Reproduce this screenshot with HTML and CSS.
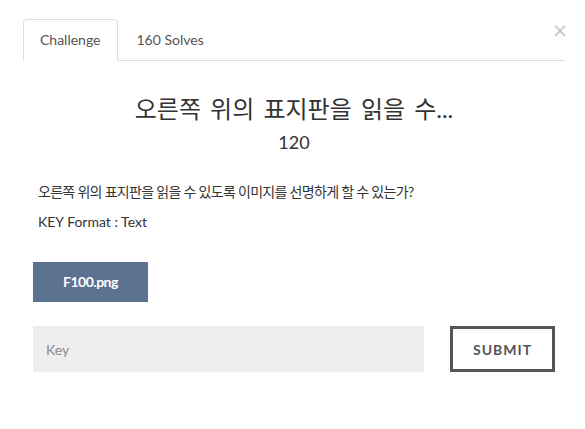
FILE: index.html
```html
<!DOCTYPE html>
<html lang="ko">
<head>
    <meta charset="UTF-8">
    <meta name="viewport" content="width=device-width, initial-scale=1.0">
    <title>Challenge</title>
    <link rel="stylesheet" href="styles.css">
</head>
<body>
    <div class="modal">
        <button class="close" type="button">&times;</button>

        <!-- Tabs -->
        <ul class="nav-tabs">
            <li class="tab active">Challenge</li>
            <li class="tab">160 Solves</li>
        </ul>

        <!-- Challenge body -->
        <div class="challenge">
            <h3 class="challenge-name">오른쪽 위의 표지판을 읽을 수...</h3>
            <div class="challenge-value">120</div>

            <div class="challenge-desc">
                <p class="desc-ko">오른쪽 위의 표지판을 읽을 수 있도록 이미지를 선명하게 할 수 있는가?</p>
                <p>KEY Format : Text</p>
            </div>

            <div class="files">
                <a class="file-button" href="#">F100.png</a>
            </div>

            <form class="key-form">
                <input type="text" class="key-input" placeholder="Key">
                <button type="submit" class="submit-button">SUBMIT</button>
            </form>
        </div>
    </div>
</body>
</html>
```

FILE: styles.css
```css
body {
    font-family: Lato, "Noto Sans CJK KR", sans-serif;
    font-size: 14px;
    color: #333;
    background-color: #fff;
    margin: 0;
}

.modal {
    position: relative;
    padding: 19px 20px 0 23px;
}

.close {
    position: absolute;
    top: 20px;
    right: 17px;
    padding: 0;
    border: none;
    background: none;
    font-family: "DejaVu Sans", sans-serif;
    font-size: 19px;
    line-height: 20px;
    color: #c4c4c4;
    cursor: pointer;
}

.nav-tabs {
    display: flex;
    list-style: none;
    margin: 0;
    padding: 0;
    border-bottom: 1px solid #ddd;
}

.tab {
    padding: 10px 16px;
    margin-right: 2px;
    margin-bottom: -1px;
    line-height: 20px;
    color: #555;
    border: 1px solid transparent;
    border-radius: 4px 4px 0 0;
}

.tab.active {
    border-color: #ddd;
    border-bottom-color: #fff;
    background-color: #fff;
}

.challenge {
    padding: 0 10px;
}

.challenge-name {
    margin: 35px 0 10px;
    font-size: 24px;
    font-weight: normal;
    line-height: 26px;
    text-align: center;
    word-spacing: 3px;
}

.challenge-value {
    font-size: 18px;
    line-height: 20px;
    text-align: center;
}

.challenge-desc {
    margin-top: 30px;
    padding-left: 5px;
}

.challenge-desc p {
    margin: 0 0 10px;
    line-height: 20px;
}

.challenge-desc .desc-ko {
    letter-spacing: -0.7px;
}

.files {
    margin-top: 30px;
}

.file-button {
    display: inline-block;
    width: 115px;
    height: 40px;
    line-height: 40px;
    text-align: center;
    background-color: #5b7290;
    color: #fff;
    font-weight: bold;
    text-decoration: none;
    letter-spacing: -0.5px;
}

.key-form {
    display: flex;
    justify-content: space-between;
    margin-top: 24px;
}

.key-input {
    width: 391px;
    height: 46px;
    box-sizing: border-box;
    padding: 0 13px;
    border: none;
    background-color: #eee;
    font-family: Lato, sans-serif;
    font-size: 14px;
    color: #333;
}

.key-input::placeholder {
    color: #8a8a8a;
}

.submit-button {
    width: 105px;
    height: 46px;
    box-sizing: border-box;
    border: 3px solid #555;
    background-color: #fff;
    color: #555;
    font-family: Lato, sans-serif;
    font-size: 14px;
    font-weight: bold;
    letter-spacing: 1px;
    cursor: pointer;
}
```
